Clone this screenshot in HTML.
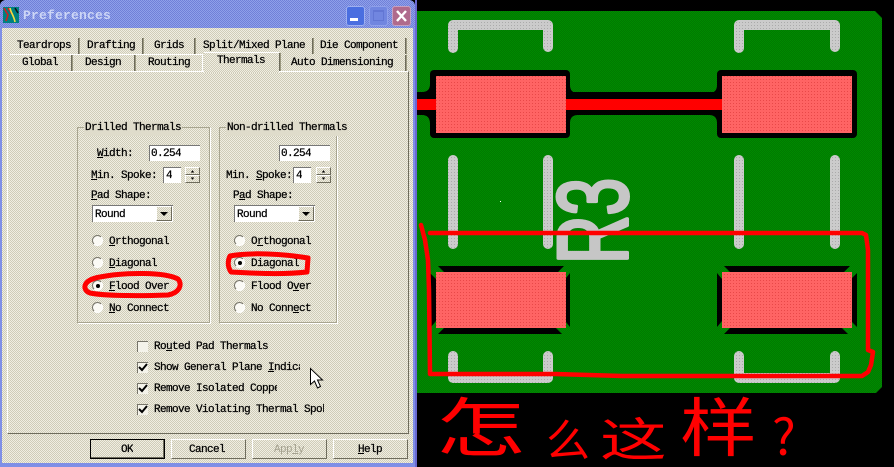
<!DOCTYPE html>
<html><head><meta charset="utf-8"><style>
html,body{margin:0;padding:0;background:#000;overflow:hidden;}
#r{position:relative;width:894px;height:467px;overflow:hidden;background:#000;}
#w{position:absolute;left:0;top:0;width:415px;height:467px;background:#7f8fe6;border-radius:6px 6px 0 0;overflow:hidden;}
#t{position:absolute;left:0;top:0;width:415px;height:28px;background:repeating-conic-gradient(#8fa0ea 0 25%,#7080d8 0 50%) 0 0/2px 2px;}
#c{position:absolute;left:2px;top:28px;width:411px;height:435px;background:repeating-conic-gradient(#f0eee2 0 25%,#cfccb8 0 50%) 0 0/2px 2px;}
.a{position:absolute;}
.x{position:absolute;margin-top:1px;font:11px/14px "Liberation Mono",monospace;letter-spacing:-.6px;-webkit-text-stroke:.25px #000;color:#000;white-space:pre;overflow:hidden;height:15px;}
.x u{text-decoration:underline;}
.sep{position:absolute;width:1px;background:#6e6c5c;border-right:1px solid #9a9880;}
.in{position:absolute;background:#fff;border-top:1px solid #777;border-left:1px solid #777;box-sizing:border-box;}
.btn{position:absolute;box-sizing:border-box;background:repeating-conic-gradient(#f0eee2 0 25%,#cfccb8 0 50%) 0 0/2px 2px;border-top:1px solid #fff;border-left:1px solid #fff;border-right:1px solid #6e6c5c;border-bottom:1px solid #6e6c5c;}
.grp{position:absolute;box-sizing:border-box;border:1px solid #a8a590;box-shadow:1px 1px 0 #fff;}
.rd{position:absolute;width:11px;height:11px;border-radius:50%;box-sizing:border-box;background:#fbfaf5;border:1px solid #fff;border-top-color:#77756a;border-left-color:#77756a;}
.rd.on::after{content:"";position:absolute;left:3px;top:3px;width:4px;height:4px;border-radius:50%;background:#000;}
.cb{position:absolute;left:137px;width:11px;height:11px;box-sizing:border-box;border-top:1px solid #77756a;border-left:1px solid #77756a;background:#f4f3ea;}
</style></head><body><div id="r">

<div id="w">
<div id="t"></div>
<svg class="a" style="left:3px;top:7px" width="16" height="16" viewBox="0 0 16 16"><rect width="16" height="16" fill="#008080"/><path d="M1 1L5 8L3 14M5 1L9 7" stroke="#d02020" stroke-width="1.6" fill="none"/><path d="M7 1C8 6 11 9 12 15" stroke="#f0e040" stroke-width="1.6" fill="none"/><path d="M12 1L15 6" stroke="#111" stroke-width="1.5" fill="none"/></svg>
<div class="x" style="left:23px;top:8px;margin-top:0;-webkit-text-stroke:0;font:bold 13px/15px 'Liberation Mono',monospace;letter-spacing:.2px;color:#cdd6f6;height:16px">Preferences</div>
<div class="a" style="left:346px;top:6px;width:19px;height:20px;border-radius:3px;background:#4a6ee0;box-shadow:inset 0 0 0 1px #9fb0f0"></div>
<div class="a" style="left:350px;top:18px;width:8px;height:3px;background:#fff"></div>
<div class="a" style="left:369px;top:6px;width:19px;height:20px;border-radius:3px;background:#7186e0;box-shadow:inset 0 0 0 1px #8fa0ea"></div>
<div class="a" style="left:373px;top:10px;width:11px;height:11px;box-sizing:border-box;border:1px solid #6276d4;border-top-width:2px"></div>
<div class="a" style="left:392px;top:6px;width:19px;height:20px;border-radius:3px;background:#b06a8c;box-shadow:inset 0 0 0 1px #c6a0c0"></div>
<svg class="a" style="left:392px;top:6px" width="19" height="20"><path d="M5 5L14 15M14 5L5 15" stroke="#fff" stroke-width="2.4"/></svg>
<div id="c"></div>

<!-- panel -->
<div class="a" style="left:7px;top:71px;width:400px;height:361px;border-left:1px solid #fff;border-top:1px solid #fff;border-right:1px solid #6e6c5c;border-bottom:1px solid #6e6c5c;box-sizing:content-box"></div>

<!-- tabs -->
<div class="x" style="left:17px;top:38px">Teardrops</div>
<div class="x" style="left:87px;top:38px">Drafting</div>
<div class="x" style="left:154px;top:38px">Grids</div>
<div class="x" style="left:203px;top:38px">Split/Mixed Plane</div>
<div class="x" style="left:320px;top:38px">Die Component</div>
<div class="sep" style="left:78px;top:38px;height:16px"></div>
<div class="sep" style="left:142px;top:38px;height:16px"></div>
<div class="sep" style="left:194px;top:38px;height:16px"></div>
<div class="sep" style="left:312px;top:38px;height:16px"></div>
<div class="sep" style="left:405px;top:38px;height:16px"></div>
<div class="a" style="left:10px;top:54px;width:192px;height:1px;background:#fff"></div>
<div class="x" style="left:22px;top:55px">Global</div>
<div class="x" style="left:85px;top:55px">Design</div>
<div class="x" style="left:148px;top:55px">Routing</div>
<div class="sep" style="left:71px;top:55px;height:16px"></div>
<div class="sep" style="left:134px;top:55px;height:16px"></div>
<div class="a" style="left:202px;top:54px;width:1px;height:18px;background:#fff"></div>
<div class="a" style="left:204px;top:52px;width:75px;height:21px;background:repeating-conic-gradient(#f0eee2 0 25%,#cfccb8 0 50%) 0 0/2px 2px;border-top:1px solid #fff;box-sizing:border-box"></div>
<div class="x" style="left:217px;top:53px">Thermals</div>
<div class="sep" style="left:279px;top:53px;height:18px"></div>
<div class="x" style="left:291px;top:55px">Auto Dimensioning</div>
<div class="sep" style="left:405px;top:55px;height:16px"></div>

<!-- group boxes -->
<div class="grp" style="left:77px;top:127px;width:133px;height:196px"></div>
<div class="grp" style="left:219px;top:127px;width:118px;height:196px"></div>
<div class="x" style="left:84px;top:120px;background:#dfdccb;padding:0 1px">Drilled Thermals</div>
<div class="x" style="left:226px;top:120px;background:#dfdccb;padding:0 1px">Non-drilled Thermals</div>

<!-- drilled -->
<div class="x" style="left:97px;top:146px"><u>W</u>idth:</div>
<div class="in" style="left:149px;top:145px;width:51px;height:16px"></div>
<div class="x" style="left:151px;top:146px">0.254</div>
<div class="x" style="left:91px;top:168px"><u>M</u>in. Spoke:</div>
<div class="in" style="left:163px;top:167px;width:18px;height:16px"></div>
<div class="x" style="left:166px;top:168px">4</div>
<div class="btn" style="left:185px;top:167px;width:15px;height:8px"></div>
<div class="btn" style="left:185px;top:175px;width:15px;height:8px"></div>
<svg class="a" style="left:185px;top:167px" width="15" height="16"><path d="M6 5h3M7 4h1M6 11h3M7 12h1" stroke="#000"/></svg>
<div class="x" style="left:91px;top:188px"><u>P</u>ad Shape:</div>
<div class="in" style="left:92px;top:205px;width:81px;height:17px"></div>
<div class="x" style="left:95px;top:207px">Round</div>
<div class="btn" style="left:156px;top:206px;width:16px;height:15px"></div>
<svg class="a" style="left:156px;top:206px" width="16" height="15"><path d="M4 6h8l-4 4z" fill="#000"/></svg>
<div class="rd" style="left:92px;top:235px"></div>
<div class="x" style="left:109px;top:234px"><u>O</u>rthogonal</div>
<div class="rd" style="left:92px;top:257px"></div>
<div class="x" style="left:109px;top:256px"><u>D</u>iagonal</div>
<div class="rd on" style="left:92px;top:280px"></div>
<div class="x" style="left:109px;top:279px"><u>F</u>lood Over</div>
<div class="rd" style="left:92px;top:302px"></div>
<div class="x" style="left:109px;top:301px"><u>N</u>o Connect</div>

<!-- non-drilled -->
<div class="in" style="left:279px;top:145px;width:51px;height:16px"></div>
<div class="x" style="left:281px;top:146px">0.254</div>
<div class="x" style="left:226px;top:168px">Min. <u>S</u>poke:</div>
<div class="in" style="left:293px;top:167px;width:18px;height:16px"></div>
<div class="x" style="left:296px;top:168px">4</div>
<div class="btn" style="left:316px;top:167px;width:15px;height:8px"></div>
<div class="btn" style="left:316px;top:175px;width:15px;height:8px"></div>
<svg class="a" style="left:316px;top:167px" width="15" height="16"><path d="M6 5h3M7 4h1M6 11h3M7 12h1" stroke="#000"/></svg>
<div class="x" style="left:233px;top:188px">P<u>a</u>d Shape:</div>
<div class="in" style="left:234px;top:205px;width:81px;height:17px"></div>
<div class="x" style="left:237px;top:207px">Round</div>
<div class="btn" style="left:298px;top:206px;width:16px;height:15px"></div>
<svg class="a" style="left:298px;top:206px" width="16" height="15"><path d="M4 6h8l-4 4z" fill="#000"/></svg>
<div class="rd" style="left:234px;top:235px"></div>
<div class="x" style="left:251px;top:234px">O<u>r</u>thogonal</div>
<div class="rd on" style="left:234px;top:257px"></div>
<div class="x" style="left:251px;top:256px">Diagonal</div>
<div class="rd" style="left:234px;top:280px"></div>
<div class="x" style="left:251px;top:279px">Flood O<u>v</u>er</div>
<div class="rd" style="left:234px;top:302px"></div>
<div class="x" style="left:251px;top:301px">No Conn<u>e</u>ct</div>

<!-- checkboxes -->
<div class="cb" style="top:341px"></div>
<div class="x" style="left:154px;top:339px">Ro<u>u</u>ted Pad Thermals</div>
<div class="cb" style="top:362px"></div>
<div class="x" style="left:154px;top:360px;width:146px">Show General Plane <u>I</u>ndicators</div>
<div class="cb" style="top:383px"></div>
<div class="x" style="left:154px;top:381px;width:123px">Remove Isolated Copper</div>
<div class="cb" style="top:404px"></div>
<div class="x" style="left:154px;top:402px;width:170px">Remove Violating Thermal Spokes</div>
<svg class="a" style="left:137px;top:341px" width="11" height="75" fill="none" stroke="#000" stroke-width="2"><path d="M2 26l3 3 5-6M2 47l3 3 5-6M2 68l3 3 5-6"/></svg>

<!-- cursor -->
<svg class="a" style="left:309px;top:367px" width="16" height="24"><path d="M1.5 1.500V17.500L5.500 14L8.500 21L11.500 19.500L8.500 13H13.500Z" fill="#fff" stroke="#000"/></svg>

<!-- buttons -->
<div class="btn" style="left:90px;top:439px;width:75px;height:20px;border:1px solid #000;box-shadow:inset -1px -1px 0 #6e6c5c"></div>
<div class="x" style="left:121px;top:442px">OK</div>
<div class="btn" style="left:171px;top:439px;width:75px;height:20px"></div>
<div class="x" style="left:189px;top:442px">Cancel</div>
<div class="btn" style="left:252px;top:439px;width:75px;height:20px"></div>
<div class="x" style="left:274px;top:442px;color:#a5a290;-webkit-text-stroke:0">App<u>l</u>y</div>
<div class="btn" style="left:333px;top:439px;width:75px;height:20px"></div>
<div class="x" style="left:358px;top:442px"><u>H</u>elp</div>
</div>

<!-- PCB -->
<svg class="a" style="left:0;top:0" width="894" height="467" viewBox="0 0 894 467">
<defs>
<pattern id="g" width="2" height="2" patternUnits="userSpaceOnUse"><rect width="2" height="2" fill="#007a00"/><rect width="1" height="1" fill="#008a00"/><rect x="1" y="1" width="1" height="1" fill="#008a00"/></pattern>
<pattern id="s" width="3" height="3" patternUnits="userSpaceOnUse"><rect width="3" height="3" fill="#cbcbcb"/><rect x="1" y="1" width="1" height="1" fill="#aaa"/></pattern>
<pattern id="p" width="3" height="3" patternUnits="userSpaceOnUse"><rect width="3" height="3" fill="#ff6464"/><rect x="1" y="1" width="1" height="1" fill="#e84848"/></pattern>
</defs>
<path d="M417 11H875L882 18V387L876 393H417Z" fill="url(#g)"/>

<!-- top clearance -->
<rect x="430" y="70" width="140" height="68" rx="4" fill="#000"/>
<rect x="717" y="70" width="140" height="68" rx="4" fill="#000"/>
<rect x="417" y="92" width="300" height="23" fill="#000"/>
<path d="M570 85Q570 93 578 93H570ZM717 85Q717 93 709 93H717ZM570 123Q570 115 578 115H570ZM717 123Q717 115 709 115H717ZM430 84Q430 92 422 92H430ZM430 124Q430 115 422 115H430Z" fill="#000"/>
<rect x="417" y="99" width="305" height="11" fill="#f00"/>
<rect x="436" y="76" width="130" height="57" fill="url(#p)"/>
<rect x="722" y="76" width="130" height="57" fill="url(#p)"/>

<!-- bottom pads with spokes -->
<path d="M438 266H564L558 272H444ZM430 273L436 279V321L431 327ZM570 273L566 278V322L570 327ZM438 334H562L556 328H444Z" fill="#000"/>
<path d="M724 266H850L844 272H730ZM717 273L722 279V321L717 327ZM857 273L852 278V322L857 327ZM724 334H848L842 328H730Z" fill="#000"/>
<rect x="436" y="272" width="130" height="56" fill="url(#p)"/>
<rect x="722" y="272" width="130" height="56" fill="url(#p)"/>

<!-- silk -->
<g fill="none" stroke="url(#s)" stroke-width="10" stroke-linecap="round" stroke-linejoin="round">
<path d="M453 48V25H548V47"/>
<path d="M739 48V25H835V47"/>
<path d="M453 160.010V244M548 160.010V244M739 160.010V244M835 160.010V244"/>
<path d="M453 356V378H548V356"/>
<path d="M739 356V378H835V356"/>
</g>
<text transform="translate(627,264) rotate(-90)" font-family="Liberation Sans,sans-serif" font-size="99" textLength="86" lengthAdjust="spacingAndGlyphs" fill="#c6c6c6" stroke="#c6c6c6" stroke-width="4" stroke-linejoin="round">R3</text>
<rect x="500" y="201" width="1" height="1" fill="#fff"/>

<!-- hand-drawn rectangle -->
<path d="M421 225L425 240L428 260L429 290L430 374L436 374L555 374L622 376L862 376L868 372L871 365L873 352L868 350L868 250L866 235L862 233L430 233" fill="none" stroke="#f00" stroke-width="4.500" stroke-linejoin="round" stroke-linecap="round"/>

<!-- ellipses on dialog -->
<path d="M100 277C125 272 165 272 178 279C183 285 179 293 168 295C140 296 105 296 90 293C82 290 82 280 100 277Z" fill="none" stroke="#f00" stroke-width="5"/>
<path d="M230 256C250 252 285 254 308 258L307 272C280 275 250 273 231 272C227 266 228 260 230 256Z" fill="none" stroke="#f00" stroke-width="5" stroke-linejoin="round"/>

<!-- handwritten note -->
<g font-family="WenQuanYi Zen Hei,Noto Sans CJK SC,sans-serif" fill="#f00">
<text transform="translate(436,451) scale(1.4,1)" font-size="64">怎</text>
<text transform="translate(546,456)" font-size="44">么</text>
<text transform="translate(600,456) scale(1.45,1)" font-size="46">这</text>
<text transform="translate(680,451) scale(1.2,1)" font-size="64">样</text>
<text transform="translate(772,455)" font-size="50">?</text>
</g>

<rect x="415" y="0" width="2" height="467" fill="#6a6ad0"/>
</svg>
</div></body></html>
